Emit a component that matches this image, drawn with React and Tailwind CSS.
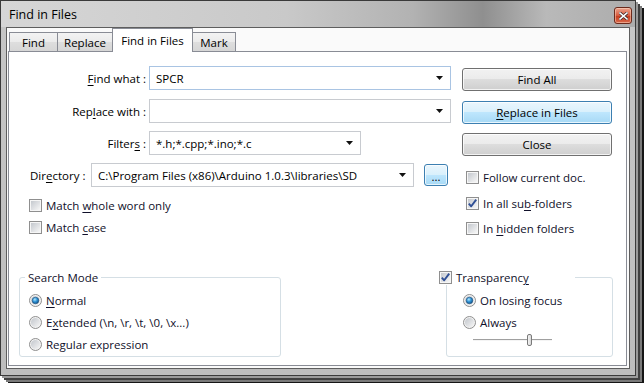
import React from "react";

const U = ({ children }) => (
  <span className="underline underline-offset-[2px] decoration-[1px]">{children}</span>
);

function CheckBox({ checked }) {
  return (
    <svg width="13" height="13" viewBox="0 0 13 13" className="shrink-0">
      <defs>
        <linearGradient id="cbg" x1="0" y1="0" x2="1" y2="1">
          <stop offset="0" stopColor="#c4c8ce" />
          <stop offset="1" stopColor="#f7f7f7" />
        </linearGradient>
      </defs>
      <rect x="0.5" y="0.5" width="12" height="12" fill="#f6f6f6" stroke="#8f8f8f" />
      <rect x="2" y="2" width="9" height="9" fill="url(#cbg)" />
      {checked && (
        <path d="M2.8 6.6 L5.2 9.3 L10.2 2.6" fill="none" stroke="#2f4f95" strokeWidth="1.9" strokeLinejoin="round" />
      )}
    </svg>
  );
}

function Radio({ checked }) {
  return (
    <svg width="13" height="13" viewBox="0 0 13 13" className="shrink-0">
      <defs>
        <linearGradient id="rbg" x1="0" y1="0" x2="1" y2="1">
          <stop offset="0" stopColor="#c2c6cc" />
          <stop offset="1" stopColor="#f6f6f6" />
        </linearGradient>
        <radialGradient id="rdot" cx="0.4" cy="0.35" r="0.75">
          <stop offset="0" stopColor="#b4e8fd" />
          <stop offset="0.45" stopColor="#2f93d6" />
          <stop offset="1" stopColor="#0b4577" />
        </radialGradient>
      </defs>
      <circle cx="6.5" cy="6.5" r="6" fill="#f2f2f2" stroke="#8f8f8f" />
      <circle cx="6.5" cy="6.5" r="4.6" fill="url(#rbg)" />
      {checked && <circle cx="6.5" cy="6.5" r="3.3" fill="url(#rdot)" stroke="#1c4f7c" strokeWidth="0.6" />}
    </svg>
  );
}

function Arrow() {
  return (
    <svg width="7" height="4" viewBox="0 0 7 4" className="shrink-0">
      <path d="M0 0 H7 L3.5 4 Z" fill="#111" />
    </svg>
  );
}

function Combo({ width, value, focused }) {
  return (
    <div
      className={
        "h-[24px] border bg-white flex items-center pl-[6px] pr-[7px] " +
        (focused ? "border-[#a9c4e3]" : "border-[#c8cbd0]")
      }
      style={{ width }}
    >
      <span className="flex-1 text-black whitespace-nowrap overflow-hidden">{value}</span>
      <Arrow />
    </div>
  );
}

function Button({ children, blue }) {
  return (
    <div
      className={
        "w-[150px] h-[23px] rounded-[3px] border flex items-center justify-center text-black shadow-[inset_0_0_0_1px_rgba(255,255,255,0.75)] " +
        (blue
          ? "border-[#3c7fb1] bg-[linear-gradient(#eaf6fd,#d9f0fc_49%,#bee6fd_50%,#a7d9f5)]"
          : "border-[#707070] bg-[linear-gradient(#f2f2f2,#ebebeb_49%,#dddddd_50%,#cfcfcf)]")
      }
    >
      {children}
    </div>
  );
}

function CheckRow({ checked, children, className = "" }) {
  return (
    <div className={"h-[16px] flex items-center gap-[4px] text-[#10102a] " + className}>
      <CheckBox checked={checked} />
      <span className="whitespace-nowrap">{children}</span>
    </div>
  );
}

function RadioRow({ checked, children, className = "" }) {
  return (
    <div className={"h-[16px] flex items-center gap-[4px] text-[#10102a] " + className}>
      <Radio checked={checked} />
      <span className="whitespace-nowrap">{children}</span>
    </div>
  );
}

const tabCls =
  "h-[19px] -ml-[1px] border border-b-0 border-[#898c95] bg-[linear-gradient(#f3f3f3,#ebebeb_50%,#dedede_51%,#d6d6d6)] flex items-center justify-center text-black";

export default function App() {
  return (
    <div className="w-[644px] h-[383px] bg-white overflow-hidden font-['Open_Sans','Noto_Sans',sans-serif] text-[11.5px] leading-[15px]">
      <div className="w-[636px] h-[376px] border border-[#3a3a3a] bg-[#c3c3c3] flex flex-col shadow-[2px_2px_0_#9a9a9a,4px_4px_0_#404040,6px_6px_0_#7a7a7a,8px_8px_0_#151515]">
        {/* title bar */}
        <div className="h-[26px] shrink-0 flex items-start bg-[linear-gradient(90deg,#d6d6d6_0%,#c9c9c9_45%,#b2b2b2_65%,#8f8f8f_76%,#b9b9b9_86%,#acacac_100%)]">
          <span className="ml-[8px] mt-[6px] text-[12.5px] leading-[16px] text-black">Find in Files</span>
          <div className="ml-auto mr-[3px] mt-[6px] w-[18px] h-[17px] rounded-[3px] border border-[#6b2a1c] bg-[linear-gradient(#eba58f,#d75a3d_50%,#c43a1c_51%,#d9694a)] flex items-center justify-center shadow-[inset_0_0_0_1px_rgba(255,220,200,0.5)]">
            <svg width="9" height="8" viewBox="0 0 9 8">
              <path d="M1 1 L8 7 M8 1 L1 7" stroke="#3b2a2a" strokeWidth="3" strokeLinecap="square" />
              <path d="M1 1 L8 7 M8 1 L1 7" stroke="#ffffff" strokeWidth="1.6" strokeLinecap="square" />
            </svg>
          </div>
        </div>
        {/* body */}
        <div className="flex-1 flex px-[5px] pb-[6px] bg-[linear-gradient(#c6c6c6,#bdbdbd)]">
          <div className="flex-1 border border-[#5e5e5e] bg-[#fafafa] flex flex-col pl-[1px] pr-[2px] pb-[2px]">
            {/* tabs */}
            <div className="h-[23px] shrink-0 flex items-end pl-[2px]">
              <div className={"w-[49px] " + tabCls}>Find</div>
              <div className={"w-[56px] " + tabCls}>Replace</div>
              <div className="relative z-10 w-[81px] h-[24px] -mb-[1px] -ml-[1px] border border-b-0 border-[#898c95] bg-white flex items-start pt-[4px] justify-center text-black">
                Find in Files
              </div>
              <div className={"w-[44px] " + tabCls}>Mark</div>
            </div>
            {/* panel */}
            <div className="flex-1 border border-[#898c95] bg-white flex flex-col">
              <div className="h-[218px] shrink-0 flex">
                {/* left column */}
                <div className="w-[453px] flex flex-col">
                  <div className="mt-[14px] flex items-center">
                    <div className="w-[137px] text-right text-black"><U>F</U>ind what :</div>
                    <div className="ml-[3px]"><Combo width={302} value="SPCR" focused /></div>
                  </div>
                  <div className="mt-[9px] flex items-center">
                    <div className="w-[137px] text-right text-black">Rep<U>l</U>ace with :</div>
                    <div className="ml-[3px]"><Combo width={302} value="" /></div>
                  </div>
                  <div className="mt-[8px] flex items-center">
                    <div className="w-[137px] text-right text-black">Filter<U>s</U> :</div>
                    <div className="ml-[3px]"><Combo width={212} value="*.h;*.cpp;*.ino;*.c" /></div>
                  </div>
                  <div className="mt-[8px] flex items-center pl-[21px]">
                    <div className="w-[57px] whitespace-nowrap text-black">Dir<U>e</U>ctory :</div>
                    <div className="ml-[4px]">
                      <Combo width={323} value="C:\Program Files (x86)\Arduino 1.0.3\libraries\SD" />
                    </div>
                    <div className="ml-[10px] w-[24px] h-[22px] rounded-[3px] border border-[#3c7fb1] bg-[linear-gradient(#eaf6fd,#d9f0fc_49%,#bee6fd_50%,#a7d9f5)] shadow-[inset_0_0_0_1px_rgba(255,255,255,0.7)] flex items-end justify-center pb-[3px] text-black leading-[10px]">
                      ...
                    </div>
                  </div>
                  <CheckRow className="mt-[10px] ml-[20px]">
                    Match <U>w</U>hole word only
                  </CheckRow>
                  <CheckRow className="mt-[6px] ml-[20px]">
                    Match <U>c</U>ase
                  </CheckRow>
                </div>
                {/* right column */}
                <div className="w-[150px] flex flex-col">
                  <div className="mt-[16px]"><Button>Find All</Button></div>
                  <div className="mt-[10px]"><Button blue><U>R</U>eplace in Files</Button></div>
                  <div className="mt-[9px]"><Button>Close</Button></div>
                  <CheckRow className="mt-[13px] ml-[4px]">Follow current doc.</CheckRow>
                  <CheckRow checked className="mt-[10px] ml-[4px]">
                    In all su<U>b</U>-folders
                  </CheckRow>
                  <CheckRow className="mt-[9px] ml-[4px]">
                    In <U>h</U>idden folders
                  </CheckRow>
                </div>
              </div>
              {/* groups */}
              <div className="flex">
                <fieldset className="ml-[10px] w-[262px] h-[87px] border border-[#d5dfe5] rounded-[3px] flex flex-col pl-[9px]">
                  <legend className="-ml-[4px] px-[3px] text-[#10102a] leading-[15px]">Search Mode</legend>
                  <RadioRow checked className="mt-[7px]">
                    <U>N</U>ormal
                  </RadioRow>
                  <RadioRow className="mt-[6px]">
                    E<U>x</U>tended (\n, \r, \t, \0, \x...)
                  </RadioRow>
                  <RadioRow className="mt-[6px]">
                    Re<U>g</U>ular expression
                  </RadioRow>
                </fieldset>
                <fieldset className="ml-auto mr-[13px] w-[167px] h-[87px] border border-[#d5dfe5] rounded-[3px] flex flex-col pl-[16px]">
                  <legend className="-ml-[24px] w-[136px] bg-white flex items-center gap-[4px] text-[#10102a] leading-[15px]">
                    <CheckBox checked />
                    <span>
                      Transparenc<U>y</U>
                    </span>
                  </legend>
                  <RadioRow checked className="mt-[7px]">On losing focus</RadioRow>
                  <RadioRow className="mt-[6px]">Always</RadioRow>
                  <div className="mt-[4px] ml-[10px] w-[79px] h-[12px] flex items-center">
                    <div className="relative w-full h-[2px] border-t border-[#a0a0a0] border-b border-b-[#f4f4f4]">
                      <div className="absolute left-[54px] -top-[6px] w-[5px] h-[12px] rounded-[2px] border border-[#7a7a7a] bg-[linear-gradient(90deg,#f4f4f4,#d8d8d8)]" />
                    </div>
                  </div>
                </fieldset>
              </div>
            </div>
          </div>
        </div>
      </div>
    </div>
  );
}
